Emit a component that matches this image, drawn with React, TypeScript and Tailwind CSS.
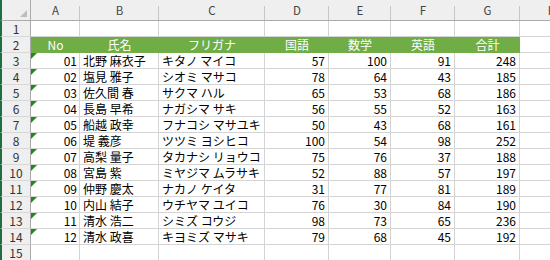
import React from "react";

type Row = [string, string, string, number, number, number, number];

const data: Row[] = [
  ["01", "北野 麻衣子", "キタノ マイコ", 57, 100, 91, 248],
  ["02", "塩見 雅子", "シオミ マサコ", 78, 64, 43, 185],
  ["03", "佐久間 春", "サクマ ハル", 65, 53, 68, 186],
  ["04", "長島 早希", "ナガシマ サキ", 56, 55, 52, 163],
  ["05", "船越 政幸", "フナコシ マサユキ", 50, 43, 68, 161],
  ["06", "堤 義彦", "ツツミ ヨシヒコ", 100, 54, 98, 252],
  ["07", "高梨 量子", "タカナシ リョウコ", 75, 76, 37, 188],
  ["08", "宮島 紫", "ミヤジマ ムラサキ", 52, 88, 57, 197],
  ["09", "仲野 慶太", "ナカノ ケイタ", 31, 77, 81, 189],
  ["10", "内山 結子", "ウチヤマ ユイコ", 76, 30, 84, 190],
  ["11", "清水 浩二", "シミズ コウジ", 98, 73, 65, 236],
  ["12", "清水 政喜", "キヨミズ マサキ", 79, 68, 45, 192],
];

const cols = ["A", "B", "C", "D", "E", "F", "G", "H"];
const font = { fontFamily: '"Noto Sans CJK JP", "Noto Sans", sans-serif' };

function RowHead({ n }: { n: number }) {
  return (
    <div className="h-[16px] bg-[#efefef] border-l-2 border-l-[#1e6e42] border-r border-r-[#ababab] border-b border-b-[#d8d8d8] flex items-center justify-center text-[12px] text-[#333] leading-none">
      {n}
    </div>
  );
}

function Cell({
  children,
  align = "left",
  pr = "pr-[3px]",
}: {
  children?: React.ReactNode;
  align?: "left" | "right";
  pr?: string;
}) {
  return (
    <div
      className={`h-[16px] bg-white border-r border-b border-[#d4d4d4] flex items-center overflow-visible whitespace-nowrap text-black leading-none text-[12px] ${
        align === "right" ? `justify-end ${pr}` : "justify-start pl-[3px]"
      }`}
    >
      {children}
    </div>
  );
}

function GreenCell({ children }: { children?: React.ReactNode }) {
  return (
    <div className="h-[16px] bg-[#70ad47] flex items-center justify-center text-white text-[12px] leading-none whitespace-nowrap">
      {children}
    </div>
  );
}

export default function App() {
  return (
    <div className="w-[550px] h-[260px] overflow-hidden bg-white" style={font}>
      <div className="grid grid-cols-[31px_49px_79px_106px_64px_62px_64px_65px_64px] w-[584px]">
        {/* column header */}
        <div className="relative h-[21px] bg-[#efefef] border-l-2 border-l-[#1e6e42] border-r border-r-[#ababab] border-b border-b-[#ababab]">
          <span className="absolute right-[3px] bottom-[3px] w-0 h-0 border-l-[7px] border-l-transparent border-b-[7px] border-b-[#bdbdbd]" />
        </div>
        {cols.map((c) => (
          <div
            key={c}
            className="relative h-[21px] bg-[#efefef] border-b border-b-[#ababab] flex items-center justify-center text-[11.5px] text-[#444] pt-[1px]"
          >
            {c}
            <span className="absolute right-0 top-[6px] bottom-0 w-px bg-[#c6c6c6]" />
          </div>
        ))}

        {/* row 1 */}
        <RowHead n={1} />
        {cols.map((c) => (
          <Cell key={"r1" + c} />
        ))}

        {/* row 2 */}
        <RowHead n={2} />
        <GreenCell>No</GreenCell>
        <GreenCell>氏名</GreenCell>
        <GreenCell>フリガナ</GreenCell>
        <GreenCell>国語</GreenCell>
        <GreenCell>数学</GreenCell>
        <GreenCell>英語</GreenCell>
        <GreenCell>合計</GreenCell>
        <Cell />

        {data.map((r, i) => (
          <React.Fragment key={r[0]}>
            <RowHead n={i + 3} />
            <div className="relative h-[16px] bg-white border-r border-b border-[#d4d4d4] flex items-center justify-end pr-[2px] text-[12px] text-black leading-none">
              <span className="absolute left-0 top-0 w-0 h-0 border-t-[6px] border-t-[#1f8a1f] border-r-[6px] border-r-transparent" />
              {r[0]}
            </div>
            <Cell>{r[1]}</Cell>
            <Cell>{r[2]}</Cell>
            <Cell align="right">{r[3]}</Cell>
            <Cell align="right">{r[4]}</Cell>
            <Cell align="right">{r[5]}</Cell>
            <Cell align="right">{r[6]}</Cell>
            <Cell />
          </React.Fragment>
        ))}

        <RowHead n={15} />
        {cols.map((c) => (
          <Cell key={"r15" + c} />
        ))}
      </div>
    </div>
  );
}
